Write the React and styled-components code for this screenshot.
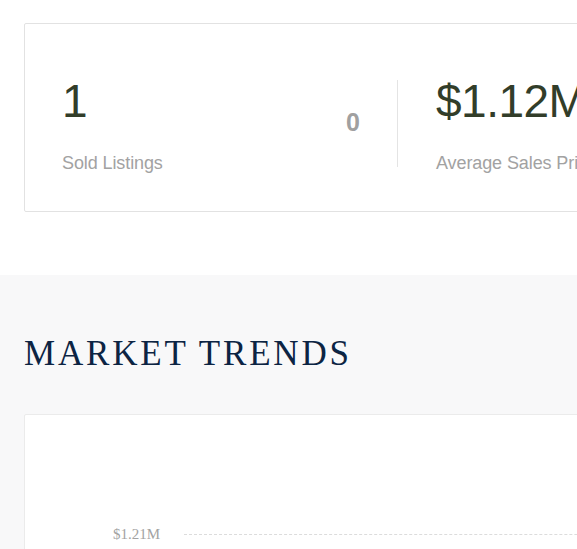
import React from "react";
import styled, { createGlobalStyle } from "styled-components";

const GlobalStyle = createGlobalStyle`
  html, body {
    margin: 0;
    padding: 0;
    background: #ffffff;
    overflow: hidden;
  }
  body {
    font-family: "Liberation Sans", Arial, sans-serif;
  }
`;

const Page = styled.div`
  width: 1400px;
`;

const StatsSection = styled.section`
  background: #ffffff;
  padding: 23px 0 63px 24px;
`;

const StatsCard = styled.div`
  display: flex;
  align-items: stretch;
  width: 1200px;
  height: 189px;
  box-sizing: border-box;
  border: 1px solid #e2e2e2;
  border-radius: 2px;
  padding: 54px 0 0 37px;
  background: #fff;
`;

const Stat = styled.div`
  display: flex;
  justify-content: space-between;
  align-items: flex-start;
  width: ${(p) => p.width}px;
  height: 87px;
  box-sizing: border-box;
  padding-right: ${(p) => (p.divider ? 37 : 0)}px;
  margin-top: 2px;
  border-right: ${(p) => (p.divider ? "1px solid #e4e4e4" : "none")};
  & + & {
    padding-left: 38px;
  }
`;

const StatMain = styled.div`
  display: flex;
  flex-direction: column;
`;

const StatValue = styled.div`
  font-size: 46px;
  line-height: 46px;
  margin-top: -2px;
  color: #323d29;
  font-weight: 400;
  letter-spacing: -0.5px;
  white-space: nowrap;
`;

const StatLabel = styled.div`
  margin-top: 29px;
  font-size: 18px;
  line-height: 20px;
  letter-spacing: -0.1px;
  color: #a2a2a2;
  white-space: nowrap;
`;

const StatChange = styled.div`
  margin-top: 29px;
  font-size: 25px;
  line-height: 26px;
  font-weight: 700;
  color: #a0a0a0;
`;

const TrendsSection = styled.section`
  background: #f8f8f9;
  padding: 57px 0 0 24px;
  height: 300px;
`;

const Title = styled.h2`
  margin: 0;
  font-family: "Liberation Serif", "Times New Roman", serif;
  font-weight: 400;
  font-size: 35px;
  line-height: 44px;
  letter-spacing: 2.8px;
  color: #0c2443;
`;

const ChartCard = styled.div`
  margin-top: 38px;
  width: 1200px;
  height: 300px;
  box-sizing: border-box;
  background: #fff;
  border: 1px solid #ebebeb;
  border-radius: 2px;
  padding: 111px 0 0 88px;
`;

const GridRow = styled.div`
  display: flex;
  align-items: center;
  gap: 24px;
`;

const AxisLabel = styled.span`
  font-family: "Liberation Serif", "Times New Roman", serif;
  font-size: 15px;
  line-height: 16px;
  color: #a3a3a3;
`;

const GridLine = styled.div`
  flex: 1;
  height: 0;
  border-top: 1px dashed #dcdcdc;
`;

export default function App() {
  return (
    <Page>
      <GlobalStyle />
      <StatsSection>
        <StatsCard>
          <Stat width={336} divider>
            <StatMain>
              <StatValue>1</StatValue>
              <StatLabel>Sold Listings</StatLabel>
            </StatMain>
            <StatChange>0</StatChange>
          </Stat>
          <Stat width={400}>
            <StatMain>
              <StatValue>$1.12M</StatValue>
              <StatLabel>Average Sales Price</StatLabel>
            </StatMain>
          </Stat>
        </StatsCard>
      </StatsSection>
      <TrendsSection>
        <Title>MARKET TRENDS</Title>
        <ChartCard>
          <GridRow>
            <AxisLabel>$1.21M</AxisLabel>
            <GridLine />
          </GridRow>
        </ChartCard>
      </TrendsSection>
    </Page>
  );
}
